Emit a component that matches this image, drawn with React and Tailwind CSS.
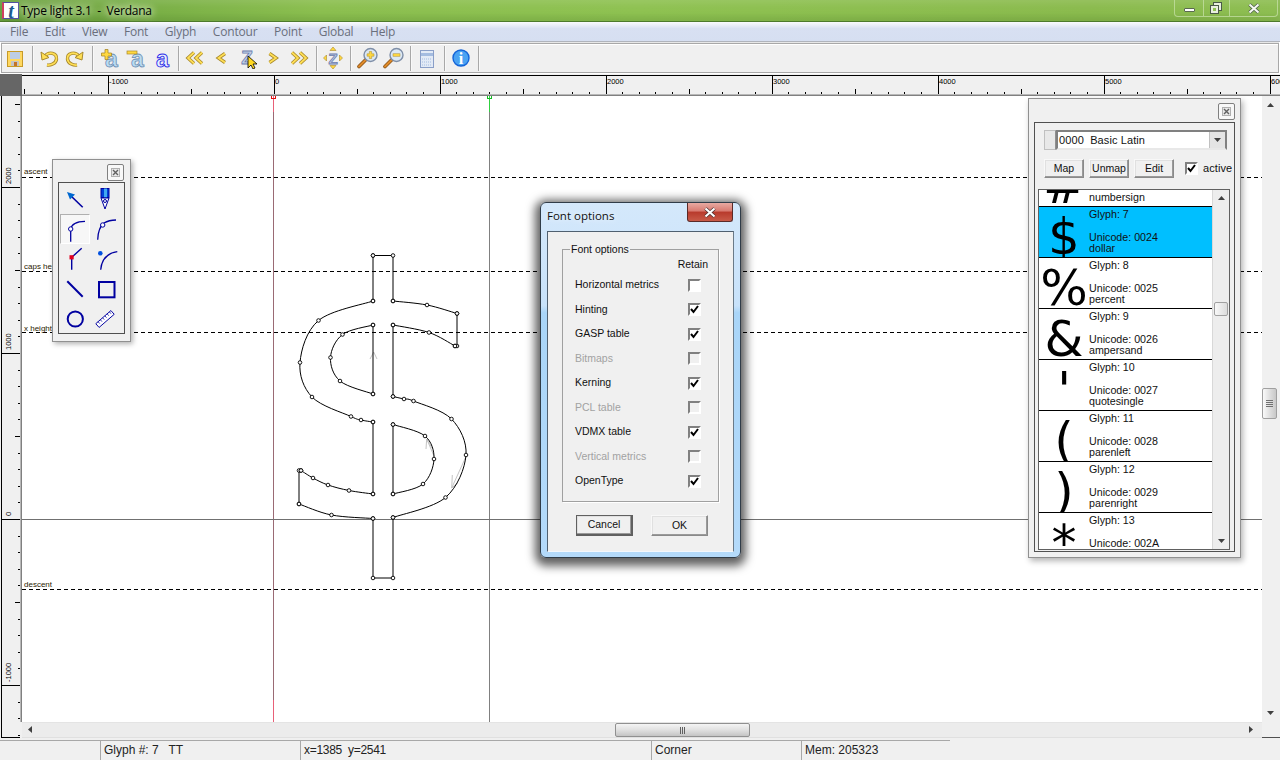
import React from 'react';

const HTICKS = [];
for (let i = -16; i <= 61; i++) HTICKS.push(i);
const VTICKS = [];
for (let i = -13; i <= 25; i++) VTICKS.push(i);

const MENU = ['File', 'Edit', 'View', 'Font', 'Glyph', 'Contour', 'Point', 'Global', 'Help'];

const OPTIONS = [
  { label: 'Horizontal metrics', checked: false },
  { label: 'Hinting', checked: true },
  { label: 'GASP table', checked: true },
  { label: 'Bitmaps', disabled: true },
  { label: 'Kerning', checked: true },
  { label: 'PCL table', disabled: true },
  { label: 'VDMX table', checked: true },
  { label: 'Vertical metrics', disabled: true },
  { label: 'OpenType', checked: true },
];

const GLYPHS = [
  { ch: '#', n: 6, code: '0023', name: 'numbersign' },
  { ch: '$', n: 7, code: '0024', name: 'dollar', selected: true },
  { ch: '%', n: 8, code: '0025', name: 'percent' },
  { ch: '&', n: 9, code: '0026', name: 'ampersand' },
  { ch: "'", n: 10, code: '0027', name: 'quotesingle' },
  { ch: '(', n: 11, code: '0028', name: 'parenleft' },
  { ch: ')', n: 12, code: '0029', name: 'parenright' },
  { ch: '*', n: 13, code: '002A', name: 'asterisk' },
];

const OUTER = [
  [[373, 255.5], [393, 255.5], [393, 301]],
  [[393, 301], [427, 305], [457, 313.5]],
  [[457, 313.5], [457, 346], [455, 346]],
  [[455, 346], [429, 332.5], [393, 325]],
  [[393, 325], [393, 396.5]],
  [[393, 396.5], [404, 399], [413.5, 401], [451.5, 419], [466, 455], [445.5, 497.5], [393, 517.5]],
  [[393, 517.5], [393, 578], [373, 578], [373, 518.5]],
  [[373, 518.5], [331.5, 515], [299, 504]],
  [[299, 504], [299, 470.5], [301, 470.5]],
  [[301, 470.5], [313, 478], [328, 485], [349, 490.5], [373, 494]],
  [[373, 494], [373, 422]],
  [[373, 422], [361, 420], [351, 416.5], [312, 397], [300, 362.5], [318.5, 320.5], [373, 301]],
  [[373, 301], [373, 255.5]],
];
const INNER_L = [
  [[373, 325], [342.5, 334.5], [330.5, 357.5], [340, 381], [373, 394]],
  [[373, 394], [373, 325]],
];
const INNER_R = [
  [[393, 424.5], [425, 436], [434, 459], [423, 484], [393, 494]],
  [[393, 494], [393, 424.5]],
];

// catmull-rom through the on-curve points
function spline(pts) {
  let d = '';
  for (let i = 0; i < pts.length - 1; i++) {
    const p0 = pts[i - 1] || pts[i];
    const p1 = pts[i];
    const p2 = pts[i + 1];
    const p3 = pts[i + 2] || p2;
    const c1 = [p1[0] + (p2[0] - p0[0]) / 6, p1[1] + (p2[1] - p0[1]) / 6];
    const c2 = [p2[0] - (p3[0] - p1[0]) / 6, p2[1] - (p3[1] - p1[1]) / 6];
    d += ` C${c1[0]} ${c1[1]} ${c2[0]} ${c2[1]} ${p2[0]} ${p2[1]}`;
  }
  return d;
}

function contourPath(parts) {
  let d = `M${parts[0][0][0]} ${parts[0][0][1]}`;
  parts.forEach((pts) => {
    if (pts.length === 2 || pts[0][0] === pts[1][0] || pts[0][1] === pts[1][1]) {
      pts.slice(1).forEach((p) => { d += ` L${p[0]} ${p[1]}`; });
    } else {
      d += spline(pts);
    }
  });
  return d;
}

function Dbl({ d }) {
  return (
    <>
      <path d={d} fill="none" stroke="#a98a2c" strokeWidth="3.4" />
      <path d={d} fill="none" stroke="#ffdf55" strokeWidth="1.7" />
    </>
  );
}

function Tool({ children }) {
  return <svg width="26" height="22" viewBox="0 0 26 22" className="shrink-0">{children}</svg>;
}

function Sep() {
  return <div className="w-[2px] h-[25px] ml-1 mr-[2px] bg-[#a8a8a8] border-r border-[#f8f8f8] shrink-0" />;
}

function LetterA({ fill, stroke }) {
  return (
    <text x="15.5" y="20" textAnchor="middle" fontFamily="Liberation Sans" fontWeight="700" fontSize="23" fill={fill} stroke={stroke} strokeWidth="0.8">a</text>
  );
}

function Toolbar() {
  return (
    <div className="h-[32px] shrink-0 bg-white pt-[1px] pb-[1px] px-[1px]">
      <div className="h-full border-y border-x border-[#a8a8a8] bg-[#f0f0f0] flex items-center pl-[0px] shadow-[inset_0_1px_0_#fff,0_-1px_0_#e8e8e8]">
        <Tool>
          <rect x="5.5" y="4.5" width="15" height="15" fill="#ffd860" stroke="#c79a28" />
          <rect x="8" y="5" width="10" height="7" fill="#bdcde6" />
          <rect x="9" y="14" width="8" height="5" fill="#c4c4c4" />
          <rect x="12" y="15" width="3" height="4" fill="#c47426" />
        </Tool>
        <Sep />
        <Tool>
          <Dbl d="M9 9 C13 4 21 6 20.5 12 C20 17 14 18.5 11 18" />
          <path d="M5 5 L6 13 L13 10.5 Z" fill="#ffdf55" stroke="#a98a2c" />
        </Tool>
        <Tool>
          <g transform="translate(26 0) scale(-1 1)">
            <Dbl d="M9 9 C13 4 21 6 20.5 12 C20 17 14 18.5 11 18" />
            <path d="M5 5 L6 13 L13 10.5 Z" fill="#ffdf55" stroke="#a98a2c" />
          </g>
        </Tool>
        <Sep />
        <Tool>
          <LetterA fill="#b9dcf2" stroke="#6f8fb4" />
          <path d="M9 2.5 H12 V6 H15.5 V9 H12 V12.5 H9 V9 H5.5 V6 H9 Z" fill="#ffd840" stroke="#a98a2c" strokeWidth="0.8" />
        </Tool>
        <Tool>
          <LetterA fill="#b9dcf2" stroke="#6f8fb4" />
          <rect x="5" y="4" width="10" height="3" fill="#ffd840" stroke="#a98a2c" strokeWidth="0.7" />
        </Tool>
        <Tool>
          <text x="14.5" y="20" textAnchor="middle" fontFamily="Liberation Sans" fontWeight="700" fontSize="23" fill="#e8f0ff" stroke="#2a2ae8" strokeWidth="0.9">a</text>
        </Tool>
        <Sep />
        <Tool>
          <Dbl d="M12 5.5 L6 11 L12 16.5" />
          <Dbl d="M20 5.5 L14 11 L20 16.5" />
        </Tool>
        <Tool><Dbl d="M17 6.5 L10.5 11 L17 15.5" /></Tool>
        <Tool>
          <text x="13" y="17" textAnchor="middle" fontFamily="Liberation Sans" fontWeight="700" fontSize="19" fill="#c0cfe6" stroke="#6c7cae" strokeWidth="0.8">Z</text>
          <path d="M14 9 L14 21 L17 18 L19 22 L21 21 L19 17 L23 17 Z" fill="#ffd820" stroke="#000" strokeWidth="0.8" />
        </Tool>
        <Tool><Dbl d="M9.5 6.5 L16 11 L9.5 15.5" /></Tool>
        <Tool>
          <Dbl d="M6 5.5 L12 11 L6 16.5" />
          <Dbl d="M14 5.5 L20 11 L14 16.5" />
        </Tool>
        <Sep />
        <Tool>
          <text x="13" y="17" textAnchor="middle" fontFamily="Liberation Sans" fontWeight="700" fontSize="15" fill="#c0cfe6" stroke="#6c7cae" strokeWidth="0.8">Z</text>
          <path d="M13 0 L16 3.5 H10 Z M13 22 L16 18.5 H10 Z M3.5 11 L6.5 8 V14 Z M22.5 11 L19.5 8 V14 Z" fill="#ffd840" stroke="#a98a2c" strokeWidth="0.6" />
        </Tool>
        <Sep />
        <Tool>
          <path d="M5 19.5 L11.5 13" stroke="#8a5418" strokeWidth="3.6" strokeLinecap="round" />
          <path d="M5 19.5 L11.5 13" stroke="#e08a28" strokeWidth="2" strokeLinecap="round" />
          <circle cx="16.5" cy="8" r="6.5" fill="#dce8f4" stroke="#7f8fa8" strokeWidth="1.4" />
          <path d="M15.3 4.5 H17.7 V6.8 H20 V9.2 H17.7 V11.5 H15.3 V9.2 H13 V6.8 H15.3 Z" fill="#ffd840" stroke="#a98a2c" strokeWidth="0.5" />
        </Tool>
        <Tool>
          <path d="M5 19.5 L11.5 13" stroke="#8a5418" strokeWidth="3.6" strokeLinecap="round" />
          <path d="M5 19.5 L11.5 13" stroke="#e08a28" strokeWidth="2" strokeLinecap="round" />
          <circle cx="16.5" cy="8" r="6.5" fill="#dce8f4" stroke="#7f8fa8" strokeWidth="1.4" />
          <rect x="13" y="6.8" width="7" height="2.4" fill="#ffd840" stroke="#a98a2c" strokeWidth="0.5" />
        </Tool>
        <Sep />
        <Tool>
          <rect x="6.5" y="3.5" width="13" height="17" fill="#e2eaf6" stroke="#8a9fc8" />
          <rect x="7" y="6" width="12" height="3" fill="#a4bce0" />
          <path d="M8 12 H18 M8 15 H18 M8 18 H18" stroke="#a4bce0" strokeDasharray="1 1" />
        </Tool>
        <Sep />
        <Tool>
          <circle cx="13" cy="11" r="8" fill="#4ba3f2" stroke="#1464d8" strokeWidth="1.4" />
          <text x="13" y="16.5" textAnchor="middle" fontFamily="Liberation Serif" fontWeight="700" fontSize="16" fill="#fff">i</text>
        </Tool>
        <Sep />
      </div>
    </div>
  );
}

function TopRuler() {
  return (
    <div className="h-[22px] shrink-0 flex">
      <div className="w-[22px] bg-[#666666] shrink-0" />
      <svg width="1258" height="22" viewBox="22 74 1258 22" className="block shrink-0">
        <rect x="22" y="74" width="1258" height="22" fill="#f0f0f0" />
        <path d="M22 75.5 H1280" stroke="#000" shapeRendering="crispEdges" />
        {HTICKS.map((i) => {
          const x = Math.round(273.5 + i * 16.6) + 0.5;
          const top = i % 10 === 0 ? 75 : i % 5 === 0 ? 89 : 92;
          return <path key={i} d={`M${x} ${top} V94`} stroke="#000" shapeRendering="crispEdges" />;
        })}
        {[-1000, 0, 1000, 2000, 3000, 4000, 5000, 6000].map((v) => (
          <text key={v} x={275 + (v / 1000) * 166} y="84" fontFamily="Liberation Sans" fontSize="7.5" fill="#000">{v}</text>
        ))}
        <rect x="22" y="94.5" width="1258" height="1.5" fill="#808080" />
      </svg>
    </div>
  );
}

function LeftRuler() {
  return (
    <svg width="22" height="643" viewBox="0 96 22 643" className="block shrink-0">
      <rect x="0" y="96" width="22" height="643" fill="#f0f0f0" />
      <path d="M1.5 96 V737.5 H20" fill="none" stroke="#000" shapeRendering="crispEdges" />
      {VTICKS.map((i) => {
        const y = Math.round(519 - i * 16.6) + 0.5;
        const left = i % 10 === 0 ? 2 : i % 5 === 0 ? 15 : 18;
        return <path key={i} d={`M${left} ${y} H20`} stroke="#000" shapeRendering="crispEdges" />;
      })}
      {[2000, 1000, 0, -1000].map((v) => {
        const y = 516 - (v / 1000) * 166;
        return (
          <text key={v} x="11" y={y} transform={`rotate(-90 11 ${y})`} fontFamily="Liberation Sans" fontSize="7.5" fill="#000">{v}</text>
        );
      })}
      <rect x="20.5" y="96" width="1.5" height="626" fill="#808080" />
    </svg>
  );
}

function GuideLabel({ x, y, children }) {
  return <text x={x} y={y} fontFamily="Liberation Sans" fontSize="8" fill="#2a1a00">{children}</text>;
}

function Stage() {
  const points = [...OUTER, ...INNER_L, ...INNER_R].flatMap((p) => p);
  return (
    <svg width="1240" height="626" viewBox="22 96 1240 626" className="absolute inset-0">
      <path d="M273.5 96 V722" stroke="#9a6a74" shapeRendering="crispEdges" />
      <path d="M273.5 96 V112" stroke="#e86078" shapeRendering="crispEdges" />
      <path d="M273.5 700 V722" stroke="#e86078" shapeRendering="crispEdges" />
      <path d="M489.5 96 V722" stroke="#808080" shapeRendering="crispEdges" />
      <path d="M489.5 96 V112" stroke="#30d040" shapeRendering="crispEdges" />
      <path d="M271.5 96 V98.5 H275.5 V96" fill="none" stroke="#e01010" shapeRendering="crispEdges" />
      <path d="M487.5 96 V98.5 H491.5 V96" fill="none" stroke="#10c020" shapeRendering="crispEdges" />
      {[177, 271, 332, 589].map((y) => (
        <path key={y} d={`M22 ${y + 0.5} H1262`} stroke="#000" strokeDasharray="4 3" shapeRendering="crispEdges" />
      ))}
      <path d="M22 519.5 H1262" stroke="#707070" shapeRendering="crispEdges" />
      <GuideLabel x="24" y="174">ascent</GuideLabel>
      <GuideLabel x="24" y="269">caps height</GuideLabel>
      <GuideLabel x="24" y="331">x height</GuideLabel>
      <GuideLabel x="24" y="587">descent</GuideLabel>
      <path d="M370 359 L373.7 352 L377 359" fill="none" stroke="#c4c4c4" />
      <path d="M426 449 L426.7 439 L434 456 M426.7 439 L432 448" fill="none" stroke="#c4c4c4" />
      <path d="M465.3 458 L451.7 488 L452.3 475 M451.7 488 L458 482.7" fill="none" stroke="#c4c4c4" />
      <path d={contourPath(OUTER)} fill="none" stroke="#000" shapeRendering="geometricPrecision" />
      <path d={contourPath(INNER_L)} fill="none" stroke="#000" />
      <path d={contourPath(INNER_R)} fill="none" stroke="#000" />
      {points.map((p, i) => (
        <circle key={i} cx={p[0]} cy={p[1]} r="1.8" fill="#fff" stroke="#000" strokeWidth="0.9" />
      ))}
    </svg>
  );
}

function Arrow({ dir }) {
  const d = {
    up: 'M0 4 L3.5 0 L7 4 Z',
    down: 'M0 0 L7 0 L3.5 4 Z',
    left: 'M4 0 L4 7 L0 3.5 Z',
    right: 'M0 0 L0 7 L4 3.5 Z',
  }[dir];
  const vertical = dir === 'up' || dir === 'down';
  return (
    <svg width={vertical ? 7 : 4} height={vertical ? 4 : 7} viewBox={vertical ? '0 0 7 4' : '0 0 4 7'} className="block shrink-0">
      <path d={d} fill="#404040" />
    </svg>
  );
}

function SmallClose() {
  return (
    <div className="w-[17px] h-[17px] rounded-[2px] border border-[#808080] bg-[#f8f8f8] flex items-center justify-center">
      <svg width="9" height="9" viewBox="0 0 9 9">
        <rect x="0.5" y="0.5" width="8" height="8" fill="#e8e8e8" stroke="#b0b0b0" />
        <path d="M2 2 L7 7 M7 2 L2 7" stroke="#606060" strokeWidth="1.4" />
      </svg>
    </div>
  );
}

function Check({ checked }) {
  return (
    <div className="w-[13px] h-[13px] shrink-0 border-2 border-t-[#808080] border-l-[#808080] border-r-white border-b-white bg-white flex items-center justify-center">
      {checked && (
        <svg width="9" height="9" viewBox="0 0 9 9">
          <path d="M1 4 L3.5 7 L8 1" fill="none" stroke="#000" strokeWidth="2" />
        </svg>
      )}
    </div>
  );
}

function DisabledCheck() {
  return <div className="w-[13px] h-[13px] shrink-0 border-2 border-t-[#808080] border-l-[#808080] border-r-white border-b-white bg-[#f0f0f0]" />;
}

function WinButton({ children, className }) {
  return (
    <div className={`flex items-center justify-center bg-[#f0f0f0] text-[10.5px] text-[#111] border border-t-[#f8f8f8] border-l-[#f8f8f8] border-r-[#8a8a8a] border-b-[#8a8a8a] shadow-[inset_-1px_-1px_0_#9a9a9a,inset_1px_1px_0_#e0e0e0] ${className}`}>
      {children}
    </div>
  );
}

function ToolCell({ children, active }) {
  return (
    <div className={active ? 'w-[30px] h-[30px] bg-[#f7f7f7] border border-t-[#b0b0b0] border-l-[#b0b0b0] border-r-white border-b-white' : 'w-[30px] h-[30px]'}>
      <svg width="30" height="30" viewBox="0 0 30 30" className={active ? 'block -m-px' : 'block'}>{children}</svg>
    </div>
  );
}

function ToolWindow() {
  const blue = '#0000a0';
  return (
    <div className="absolute left-[30px] top-[63px] w-[79px] h-[183px] bg-[#f0f0f0] border border-[#909090] shadow-[2px_2px_5px_rgba(0,0,0,0.3)] pl-[5px] pt-[4px]">
      <div className="flex justify-end pr-[6px]"><SmallClose /></div>
      <div className="mt-[1px] w-[67px] h-[152px] border border-[#505050] p-px grid grid-cols-[30px_30px] auto-rows-[30px]">
        <ToolCell>
          <path d="M10 11 L22.7 23.3" stroke={blue} strokeWidth="1.6" />
          <path d="M7 8 L15 10.5 L10 15.5 Z" fill="#0068d0" />
        </ToolCell>
        <ToolCell>
          <rect x="11" y="4.5" width="8" height="9" fill="#0040d8" stroke={blue} />
          <rect x="14" y="4.5" width="3" height="9" fill="#40a8f0" />
          <path d="M11 14 L15 25 L19 14 Z" fill="#fff" stroke={blue} />
          <circle cx="15" cy="17" r="1.5" fill="#fff" stroke={blue} />
        </ToolCell>
        <ToolCell active>
          <path d="M10.7 27.7 V15 Q12 7.5 25 7.3" fill="none" stroke={blue} strokeWidth="1.3" />
          <circle cx="10.7" cy="15" r="2.2" fill="#fff" stroke={blue} />
        </ToolCell>
        <ToolCell>
          <path d="M7.7 25.7 Q8 14 14 9 Q19 6 26 6" fill="none" stroke={blue} strokeWidth="1.3" />
          <circle cx="12.7" cy="11" r="2.2" fill="#fff" stroke={blue} />
        </ToolCell>
        <ToolCell>
          <path d="M11.7 25.7 V13.3 L21.7 4.3" fill="none" stroke={blue} strokeWidth="1.4" />
          <rect x="9.5" y="11.2" width="4.2" height="4.2" fill="#e00020" />
        </ToolCell>
        <ToolCell>
          <path d="M10.7 25.7 Q12 10 27.3 7.7" fill="none" stroke={blue} strokeWidth="1.3" />
          <circle cx="10.3" cy="9.3" r="2.3" fill="#0050e0" />
        </ToolCell>
        <ToolCell><path d="M7.3 7.3 L22.7 22.7" stroke={blue} strokeWidth="2" /></ToolCell>
        <ToolCell><rect x="9" y="8" width="15.5" height="15.3" fill="none" stroke={blue} strokeWidth="2" /></ToolCell>
        <ToolCell><circle cx="15.3" cy="15" r="7.6" fill="none" stroke={blue} strokeWidth="2" /></ToolCell>
        <ToolCell>
          <g transform="rotate(-41 15 15)">
            <rect x="5" y="12.5" width="20" height="5" fill="#fff" stroke={blue} strokeWidth="0.9" />
            <path d="M8 12.5 V15 M11 12.5 V15 M14 12.5 V15 M17 12.5 V15 M20 12.5 V15 M23 12.5 V15" stroke={blue} strokeWidth="0.7" />
          </g>
        </ToolCell>
      </div>
    </div>
  );
}

function FontDialog() {
  return (
    <div className="absolute left-[518px] top-[106px] w-[201px] h-[356px] rounded-[6px] border border-[#303c48] bg-[linear-gradient(to_bottom,#d4e8fb,#c8e2fa_29%,#a9d5f8_31%,#b4dafa)] shadow-[0_3px_10px_5px_rgba(0,0,0,0.62)] px-[6px] pb-[5px] flex flex-col">
      <div className="h-[28px] shrink-0 flex items-start justify-between">
        <span className="pt-[4px] text-[11.5px] text-[#111] font-['Open_Sans',sans-serif] [text-shadow:0_0_6px_white]">Font options</span>
        <div className="w-[46px] h-[19px] mr-px rounded-b-[3px] border border-t-0 border-[#5a2a28] bg-[linear-gradient(to_bottom,#e8aaa2,#d87a70_45%,#b83a2c_50%,#c85a48)] flex items-center justify-center">
          <svg width="14" height="11" viewBox="0 0 14 11">
            <path d="M2.5 1.5 L11.5 9.5 M11.5 1.5 L2.5 9.5" stroke="#4a3030" strokeWidth="3.6" />
            <path d="M2.5 1.5 L11.5 9.5 M11.5 1.5 L2.5 9.5" stroke="#ffffff" strokeWidth="2.2" />
          </svg>
        </div>
      </div>
      <div className="flex-1 bg-[#f0f0f0] border border-t-[#506070] border-l-[#506070] border-r-[#6a7a88] border-b-[#f4f8fc] pl-[14px] pt-[17px]">
        <div className="relative w-[157px] h-[253px] border border-[#a0a0a0] shadow-[1px_1px_0_#fff]">
          <span className="absolute left-[7px] -top-[7px] bg-[#f0f0f0] px-px leading-[13px] text-[10.5px] text-[#111]">Font options</span>
          <div className="h-[23px] pt-[7px] pr-[10px] text-right text-[10.5px] leading-[14px] text-[#111]">Retain</div>
          {OPTIONS.map((o) => (
            <div key={o.label} className="h-[24.5px] pl-[12px] pr-[17px] flex items-center justify-between">
              <span className={o.disabled ? 'text-[10.5px] text-[#a2a2a2]' : 'text-[10.5px] text-[#111]'}>{o.label}</span>
              {o.disabled ? <DisabledCheck /> : <Check checked={o.checked} />}
            </div>
          ))}
        </div>
        <div className="mt-[13px] ml-[14px] flex gap-[18px]">
          <WinButton className="w-[57px] h-[21px] !border-[#606060] !border-b-2 !border-r-2">Cancel</WinButton>
          <WinButton className="w-[57px] h-[21px]">OK</WinButton>
        </div>
      </div>
    </div>
  );
}

function GlyphRow({ g }) {
  return (
    <div className={g.selected ? 'h-[51px] border-b border-black bg-[#00bfff] flex' : 'h-[51px] border-b border-black bg-white flex'}>
      <div className="w-[50px] h-[50px] shrink-0 overflow-hidden text-center text-[50px] leading-[50px] pt-[5px] text-black font-['DejaVu_Sans',sans-serif]">{g.ch}</div>
      <div className="pt-[2px] text-[10.7px] leading-[11.4px] text-[#111] whitespace-pre">
        <div>Glyph: {g.n}</div>
        <div>&nbsp;</div>
        <div>Unicode: {g.code}</div>
        <div>{g.name}</div>
      </div>
    </div>
  );
}

function GlyphWindow() {
  return (
    <div className="absolute left-[1006px] top-[2px] w-[213px] h-[460px] bg-[#f0f0f0] border border-[#909090] shadow-[2px_3px_6px_rgba(0,0,0,0.3)] pl-[5px] pt-[4px]">
      <div className="flex justify-end pr-[5px]"><SmallClose /></div>
      <div className="mt-[2px] w-[201px] h-[430px] border border-[#505050] pt-[7px] pl-[3px] flex flex-col">
        <div className="ml-[6px] flex h-[20px] shrink-0">
          <div className="w-[12px] h-[20px] bg-[#e8e8e8] border border-[#c0c0c0] border-r-[#909090]" />
          <div className="w-[171px] h-[20px] border-2 border-t-[#808080] border-l-[#808080] border-r-[#808080] border-b-[#e8e8e8] bg-white flex items-center justify-between">
            <span className="pl-[1px] text-[11px] tracking-[0.1px] text-[#111] whitespace-pre">0000  Basic Latin</span>
            <div className="w-[16px] h-full bg-[#e4e4e4] border-l border-[#c0c0c0] flex items-center justify-center"><Arrow dir="down" /></div>
          </div>
        </div>
        <div className="ml-[6px] mt-[9px] h-[19px] flex items-center shrink-0">
          <WinButton className="w-[40px] h-[19px]">Map</WinButton>
          <WinButton className="ml-[5px] w-[40px] h-[19px]">Unmap</WinButton>
          <WinButton className="ml-[5px] w-[40px] h-[19px]">Edit</WinButton>
          <div className="ml-[11px]"><Check checked /></div>
          <span className="ml-[5px] text-[11px] text-[#111] tracking-[0.1px]">active</span>
        </div>
        <div className="mt-[11px] w-[192px] h-[361px] border border-[#606060] flex overflow-hidden">
          <div className="w-[173px] shrink-0 overflow-hidden">
            <div className="-mt-[34px]">
              {GLYPHS.map((g) => <GlyphRow key={g.n} g={g} />)}
            </div>
          </div>
          <div className="relative flex-1 bg-[#ededed] border-l border-[#d8d8d8] flex flex-col items-center justify-between py-[6px]">
            <Arrow dir="up" />
            <div className="absolute left-[1px] right-[1px] top-[112px] h-[14px] rounded-[2px] border border-[#a0a0a0] bg-[linear-gradient(to_right,#f8f8f8,#dcdcdc)]" />
            <Arrow dir="down" />
          </div>
        </div>
      </div>
    </div>
  );
}

function VScroll() {
  return (
    <div className="relative w-[18px] shrink-0 bg-[#f0f0f0] flex flex-col items-center pt-[7px] pb-[7px] pr-[2px] justify-between">
      <Arrow dir="up" />
      <div className="absolute left-0 top-[292px] w-[15px] h-[31px] rounded-[2px] border border-[#a0a0a0] bg-[linear-gradient(to_right,#fafafa,#e0e0e0_50%,#c8c8c8)] flex flex-col items-center justify-center gap-[1px]">
        <div className="w-[7px] h-px bg-[#707070]" />
        <div className="w-[7px] h-px bg-[#707070]" />
        <div className="w-[7px] h-px bg-[#707070]" />
        <div className="w-[7px] h-px bg-[#707070]" />
      </div>
      <Arrow dir="down" />
    </div>
  );
}

function HScroll() {
  return (
    <div className="h-[17px] shrink-0 flex">
      <div className="relative w-[1240px] h-[15px] bg-[#ececec] shadow-[inset_0_1px_0_#e4e4e4,0_1px_0_#e0e0e0] flex items-center justify-between pl-[6px] pr-[9px]">
        <Arrow dir="left" />
        <div className="absolute left-[593px] top-[1px] w-[135px] h-[14px] rounded-[2px] border border-[#909090] bg-[linear-gradient(to_bottom,#f4f4f4,#e0e0e0_50%,#c4c4c4)] flex items-center justify-center gap-[1px]">
          <div className="w-px h-[7px] bg-[#606060]" />
          <div className="w-px h-[7px] bg-[#606060]" />
          <div className="w-px h-[7px] bg-[#606060]" />
        </div>
        <Arrow dir="right" />
      </div>
      <div className="flex-1 h-[16px] border-b border-[#505050]" />
    </div>
  );
}

function StatusBar() {
  const cell = 'h-[20px] border-t border-l border-[#a8a8a8] pl-[3px] text-[12px] leading-[19px] text-[#222] whitespace-pre shrink-0';
  return (
    <div className="h-[21px] shrink-0 bg-[#f0f0f0] pt-px flex">
      <div className={`${cell} !border-l-0 w-[100px]`} />
      <div className={`${cell} w-[200px]`}>Glyph #: 7   TT</div>
      <div className={`${cell} w-[351px] tracking-[-0.3px]`}>x=1385  y=2541</div>
      <div className={`${cell} w-[150px]`}>Corner</div>
      <div className={`${cell} w-[149px]`}>Mem: 205323</div>
    </div>
  );
}

export default function App() {
  return (
    <div className="w-[1280px] h-[760px] overflow-hidden flex flex-col bg-[#f0f0f0] font-['Liberation_Sans',Arial,sans-serif]">
      <div className="h-[22px] shrink-0 flex border-b border-[#4d7a2c] bg-[linear-gradient(to_right,#6aa23e,#8cbf50_25%,#8fc252_50%,#8bbb4e_85%,#8ebe52)] shadow-[inset_0_4px_6px_rgba(255,255,255,0.1),inset_0_-5px_5px_rgba(40,90,20,0.14)]">
        <div className="mt-[2px] ml-[2px] w-[17px] h-[17px] bg-white border border-[#5050a0] border-l-2 border-l-[#d04060] flex items-center justify-center text-[20px] leading-none font-bold italic text-[#1c5c90] font-['Liberation_Serif',serif]">t</div>
        <span className="ml-[2px] pt-[2px] text-[12px] leading-[17px] text-black whitespace-pre font-['Open_Sans',sans-serif] tracking-[-0.25px] [text-shadow:0_0_7px_#f4fae8,0_0_10px_#f4fae8]">Type light 3.1  -  Verdana</span>
        <div className="ml-auto mr-[2px] h-[17px] flex rounded-b-[4px] border border-t-0 border-[#cbe3ad]/70">
          <div className="w-[29px] border-r border-[#cbe3ad]/70 flex items-center justify-center">
            <div className="mt-[3px] w-[11px] h-[4px] bg-white border border-[#5a6a50] rounded-[1px]" />
          </div>
          <div className="w-[26px] border-r border-[#cbe3ad]/70 pr-[2px] flex items-center justify-center">
            <svg width="12" height="12" viewBox="0 0 12 12">
              <rect x="3.5" y="0.5" width="8" height="8" fill="#e8f0e0" stroke="#4a5a48" />
              <rect x="0.5" y="3.5" width="8" height="8" fill="#e8f0e0" stroke="#4a5a48" />
              <rect x="3" y="6" width="3" height="3" fill="#8fc252" />
            </svg>
          </div>
          <div className="w-[47px] flex items-center justify-center">
            <svg width="14" height="11" viewBox="0 0 14 11">
              <path d="M2.5 1.5 L11.5 9.5 M11.5 1.5 L2.5 9.5" stroke="#4a5a48" strokeWidth="3.6" />
              <path d="M2.5 1.5 L11.5 9.5 M11.5 1.5 L2.5 9.5" stroke="#f4f8f0" strokeWidth="2.2" />
            </svg>
          </div>
        </div>
      </div>
      <div className="h-[20px] shrink-0 flex items-center gap-[16.6px] pl-[10px] border-b border-[#b0b4bc] bg-[linear-gradient(to_bottom,#fafbfd,#d8e0f2_35%,#d6dff1)] text-[12px] text-[#6a6f7c] font-['Open_Sans',sans-serif] tracking-[-0.2px]">
        {MENU.map((m) => <span key={m}>{m}</span>)}
      </div>
      <Toolbar />
      <TopRuler />
      <div className="h-[643px] shrink-0 flex">
        <LeftRuler />
        <div className="flex-1 flex flex-col min-w-0">
          <div className="h-[626px] shrink-0 flex">
            <div className="relative w-[1240px] h-[626px] bg-white overflow-hidden shrink-0">
              <Stage />
              <ToolWindow />
              <FontDialog />
              <GlyphWindow />
            </div>
            <VScroll />
          </div>
          <HScroll />
        </div>
      </div>
      <StatusBar />
    </div>
  );
}
